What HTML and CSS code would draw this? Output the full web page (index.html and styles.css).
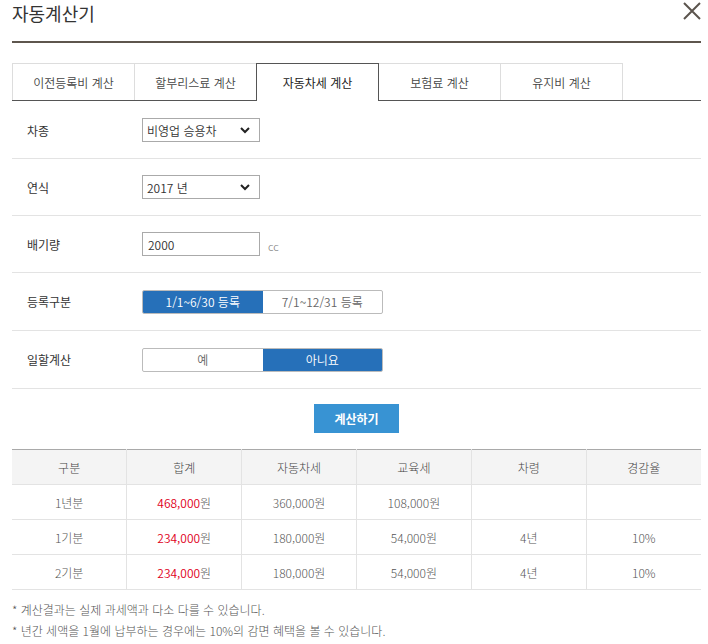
FILE: index.html
```html
<!DOCTYPE html>
<html lang="ko">
<head>
    <meta charset="UTF-8">
    <meta name="viewport" content="width=device-width, initial-scale=1.0">
    <title>자동계산기</title>
    <link rel="stylesheet" href="styles.css">
</head>
<body>
    <div class="popup">
        <div class="popup-head">
            <h1>자동계산기</h1>
            <button class="btn-close" type="button" aria-label="닫기">
                <svg width="20" height="18" viewBox="0 0 20 18">
                    <path d="M2 1 L18 17 M18 1 L2 17" stroke="#5b544d" stroke-width="2" fill="none"/>
                </svg>
            </button>
        </div>

        <ul class="tabs">
            <li>이전등록비 계산</li>
            <li>할부리스료 계산</li>
            <li class="on">자동차세 계산</li>
            <li>보험료 계산</li>
            <li>유지비 계산</li>
        </ul>

        <div class="form">
            <div class="form-row">
                <span class="label">차종</span>
                <div class="select-box">
                    <span>비영업 승용차</span>
                    <svg width="10" height="7" viewBox="0 0 10 7"><path d="M1 1 L5 5 L9 1" stroke="#222" stroke-width="2" fill="none"/></svg>
                </div>
            </div>
            <div class="form-row">
                <span class="label">연식</span>
                <div class="select-box">
                    <span>2017 년</span>
                    <svg width="10" height="7" viewBox="0 0 10 7"><path d="M1 1 L5 5 L9 1" stroke="#222" stroke-width="2" fill="none"/></svg>
                </div>
            </div>
            <div class="form-row">
                <span class="label">배기량</span>
                <div class="input-box">2000</div>
                <span class="unit">cc</span>
            </div>
            <div class="form-row tall">
                <span class="label">등록구분</span>
                <div class="seg">
                    <span class="on">1/1~6/30 등록</span>
                    <span>7/1~12/31 등록</span>
                </div>
            </div>
            <div class="form-row tall">
                <span class="label">일할계산</span>
                <div class="seg">
                    <span>예</span>
                    <span class="on">아니요</span>
                </div>
            </div>
        </div>

        <div class="btn-wrap">
            <button class="btn-calc" type="button">계산하기</button>
        </div>

        <table class="result">
            <thead>
                <tr>
                    <th>구분</th>
                    <th>합계</th>
                    <th>자동차세</th>
                    <th>교육세</th>
                    <th>차령</th>
                    <th>경감율</th>
                </tr>
            </thead>
            <tbody>
                <tr>
                    <td>1년분</td>
                    <td><em>468,000</em>원</td>
                    <td>360,000원</td>
                    <td>108,000원</td>
                    <td></td>
                    <td></td>
                </tr>
                <tr>
                    <td>1기분</td>
                    <td><em>234,000</em>원</td>
                    <td>180,000원</td>
                    <td>54,000원</td>
                    <td>4년</td>
                    <td>10%</td>
                </tr>
                <tr>
                    <td>2기분</td>
                    <td><em>234,000</em>원</td>
                    <td>180,000원</td>
                    <td>54,000원</td>
                    <td>4년</td>
                    <td>10%</td>
                </tr>
            </tbody>
        </table>

        <ul class="notes">
            <li>* 계산결과는 실제 과세액과 다소 다를 수 있습니다.</li>
            <li>* 년간 세액을 1월에 납부하는 경우에는 10%의 감면 혜택을 볼 수 있습니다.</li>
        </ul>
    </div>
</body>
</html>
```

FILE: styles.css
```css
body {
    margin: 0;
    padding: 0;
    background: #fff;
    font-family: "Noto Sans CJK KR", "Noto Sans", sans-serif;
    font-size: 12px;
    font-weight: 300;
    color: #333;
}

ul {
    list-style: none;
    margin: 0;
    padding: 0;
}

.popup {
    padding: 0 7px 0 12px;
}

/* header */
.popup-head {
    display: flex;
    justify-content: space-between;
    align-items: flex-start;
    height: 41px;
    border-bottom: 2px solid #5e564e;
}

.popup-head h1 {
    margin: 0;
    padding-top: 1px;
    font-size: 18px;
    font-weight: normal;
    line-height: 24px;
    color: #333;
}

.btn-close {
    margin: 2px -1px 0 0;
    padding: 0;
    border: none;
    background: none;
    line-height: 0;
}

/* tabs */
.tabs {
    display: flex;
    margin-top: 20px;
    border-bottom: 1px solid #555;
}

.tabs li {
    width: 121px;
    height: 36px;
    margin-left: -1px;
    margin-bottom: -1px;
    border: 1px solid #ddd;
    border-bottom: none;
    display: flex;
    align-items: center;
    justify-content: center;
    color: #444;
    font-weight: 350;
    background: #fff;
}

.tabs li:first-child {
    margin-left: 0;
}

.tabs li.on {
    position: relative;
    height: 37px;
    border-color: #555;
    color: #222;
    font-weight: normal;
}

/* form */
.form {
    padding-top: 1px;
}

.form-row {
    display: flex;
    align-items: center;
    height: 56px;
    border-bottom: 1px solid #e3e3e3;
}

.form-row.tall {
    height: 57px;
}

.form-row .label {
    width: 115px;
    padding-left: 15px;
    color: #333;
    font-weight: normal;
}

.select-box,
.input-box {
    box-sizing: border-box;
    width: 118px;
    height: 24px;
    border: 1px solid #aaa;
    padding: 0 9px 0 4px;
    display: flex;
    align-items: center;
    justify-content: space-between;
    color: #333;
    font-weight: 350;
}

.input-box {
    padding-left: 5px;
}

.unit {
    margin-left: 8px;
    margin-top: 4px;
    font-size: 11px;
    color: #777;
}

.seg {
    display: flex;
    width: 241px;
    height: 24px;
    box-sizing: border-box;
    border: 1px solid #bbb;
    border-radius: 2px;
    overflow: hidden;
}

.seg span {
    flex: 1;
    display: flex;
    align-items: center;
    justify-content: center;
    color: #666;
    font-weight: 350;
}

.seg span.on {
    background: #2670b9;
    color: #fff;
}

/* button */
.btn-wrap {
    display: flex;
    justify-content: center;
    padding: 15px 0 16px;
}

.btn-calc {
    width: 85px;
    height: 29px;
    border: none;
    background: #3893d3;
    color: #fff;
    font-family: inherit;
    font-size: 12px;
    font-weight: bold;
}

/* result table */
.result {
    width: 100%;
    border-collapse: collapse;
    table-layout: fixed;
    border-top: 1px solid #a9a9a9;
}

.result th,
.result td {
    height: 34px;
    padding: 0;
    text-align: center;
    font-weight: 300;
    border-bottom: 1px solid #e3e3e3;
    border-left: 1px solid #e3e3e3;
}

.result th:first-child,
.result td:first-child {
    border-left: none;
}

.result th {
    background: #f4f4f4;
    color: #444;
}

.result td {
    color: #555;
}

.result em {
    font-style: normal;
    font-weight: 350;
    color: #e0001b;
}

.notes {
    padding-top: 9px;
}

.notes li {
    line-height: 21px;
    color: #555;
}
```
